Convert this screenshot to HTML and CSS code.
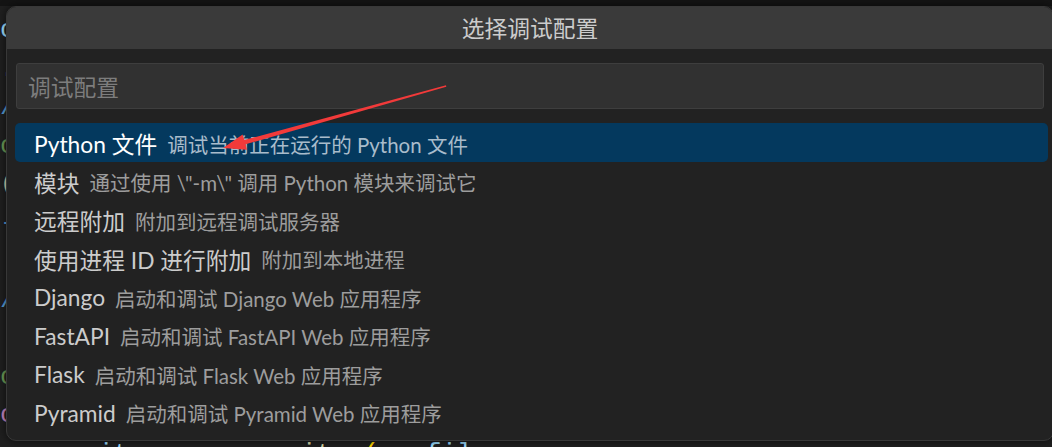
FILE: index.html
```html
<!DOCTYPE html>
<html lang="zh-CN">
<head>
<meta charset="utf-8">
<title>选择调试配置</title>
<link rel="stylesheet" href="styles.css">
</head>
<body>
<div class="editor">
  <div class="code-line"><span class="c-var">o</span></div>
  <div class="code-line"><span class="c-var">.</span></div>
  <div class="code-line"><span class="c-blue">/</span></div>
  <div class="code-line"><span class="c-green">c</span></div>
  <div class="code-line"><span class="c-yellow">(</span></div>
  <div class="code-line"><span class="c-blue">-</span></div>
  <div class="code-line"><span class="c-var"> </span></div>
  <div class="code-line"><span class="c-blue">/</span></div>
  <div class="code-line"><span class="c-var"> </span></div>
  <div class="code-line"><span class="c-green">c</span></div>
  <div class="code-line"><span class="c-purple">c</span></div>
  <div class="code-line indent"><span class="c-var">csvwriter</span> <span class="c-op">=</span> <span class="c-cls">csv</span><span class="c-op">.</span><span class="c-fn">writer</span><span class="c-br">(</span><span class="c-var">csvfile</span></div>
</div>

<div class="quick-pick">
  <div class="qp-title">选择调试配置</div>
  <div class="qp-input-wrap">
    <div class="qp-input">调试配置</div>
  </div>
  <ul class="qp-list">
    <li class="qp-row selected"><span class="qp-label">Python 文件</span><span class="qp-desc">调试当前正在运行的 Python 文件</span></li>
    <li class="qp-row"><span class="qp-label">模块</span><span class="qp-desc">通过使用 \"-m\" 调用 Python 模块来调试它</span></li>
    <li class="qp-row"><span class="qp-label">远程附加</span><span class="qp-desc">附加到远程调试服务器</span></li>
    <li class="qp-row"><span class="qp-label">使用进程 ID 进行附加</span><span class="qp-desc">附加到本地进程</span></li>
    <li class="qp-row"><span class="qp-label">Django</span><span class="qp-desc">启动和调试 Django Web 应用程序</span></li>
    <li class="qp-row"><span class="qp-label">FastAPI</span><span class="qp-desc">启动和调试 FastAPI Web 应用程序</span></li>
    <li class="qp-row"><span class="qp-label">Flask</span><span class="qp-desc">启动和调试 Flask Web 应用程序</span></li>
    <li class="qp-row"><span class="qp-label">Pyramid</span><span class="qp-desc">启动和调试 Pyramid Web 应用程序</span></li>
  </ul>
</div>

<svg class="annotation-arrow" width="1052" height="447" viewBox="0 0 1052 447" aria-hidden="true">
  <polygon points="223,148 242.6,134.6 244.4,140 446,85.3 446.3,86.7 245.6,144.3 246.9,149.8" fill="#f23a3a"/>
</svg>
</body>
</html>
```
FILE: styles.css
```css
html, body {
  margin: 0;
  padding: 0;
  width: 1052px;
  height: 447px;
  overflow: hidden;
  background: #1f1f1f;
}

body {
  position: relative;
  font-family: "Lato", "Noto Sans CJK SC", sans-serif;
}

.editor {
  border-top: 6px solid #141414;
  padding-top: 5px;
  height: 447px;
  box-sizing: border-box;
  overflow: hidden;
  font-family: "Liberation Mono", monospace;
  font-size: 26px;
  line-height: 38.5px;
  color: #9cdcfe;
}

.code-line {
  white-space: pre;
  height: 38.5px;
}

.code-line.indent {
  padding-left: 20px;
}

.c-var { color: #9cdcfe; }
.c-blue { color: #569cd6; }
.c-green { color: #6a9955; }
.c-yellow { color: #dcdcaa; }
.c-purple { color: #c586c0; }
.c-op { color: #d4d4d4; }
.c-cls { color: #4ec9b0; }
.c-fn { color: #dcdcaa; }
.c-br { color: #ffd700; }

.quick-pick {
  position: absolute;
  left: 6px;
  top: 6px;
  width: 1048px;
  height: 435px;
  box-sizing: border-box;
  background: #222222;
  border: 1px solid #383838;
  border-radius: 10px;
  overflow: hidden;
  box-shadow: 0 0 8px rgba(0, 0, 0, 0.6);
}

.qp-title {
  height: 42px;
  background: #3a3a3a;
  color: #cccccc;
  font-size: 22.75px;
  line-height: 44px;
  text-align: center;
}

.qp-input-wrap {
  padding: 14px 9px 0 9px;
}

.qp-input {
  height: 46px;
  box-sizing: border-box;
  background: #313131;
  border: 1px solid #3e3e3e;
  border-radius: 3px;
  padding-left: 11px;
  color: #7d7d7d;
  font-size: 22.75px;
  line-height: 47px;
}

.qp-list {
  list-style: none;
  margin: 14px 0 0 0;
  padding: 0 5px 0 8px;
}

.qp-row {
  height: 38.5px;
  display: flex;
  align-items: center;
  padding-left: 19px;
  padding-top: 3px;
  box-sizing: border-box;
  border-radius: 5px;
  white-space: nowrap;
}

.qp-row.selected {
  background: #04395e;
}

.qp-label {
  color: #cccccc;
  font-size: 22.75px;
}

.qp-desc {
  color: #9d9d9d;
  font-size: 20.5px;
  margin-left: 10px;
}

.selected .qp-label {
  color: #ffffff;
}

.selected .qp-desc {
  color: #a9bccb;
}

.annotation-arrow {
  position: absolute;
  left: 0;
  top: 0;
  pointer-events: none;
}
```
